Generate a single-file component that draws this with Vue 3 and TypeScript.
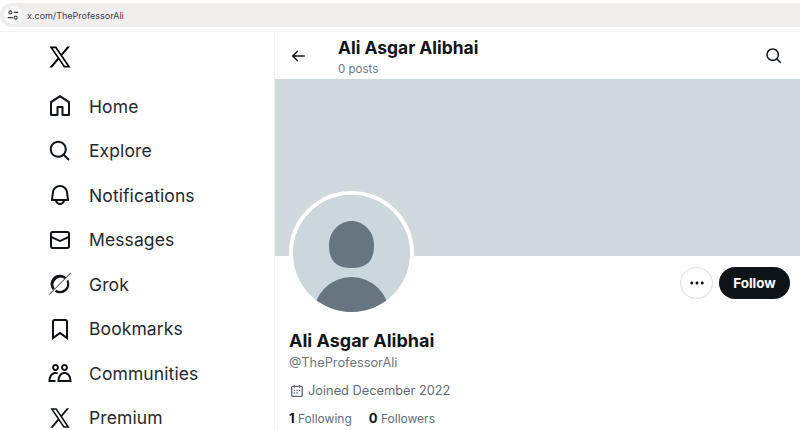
<script setup lang="ts">
interface NavItem { label: string; icon: string }
const xLogo = 'M21.742 21.75l-7.563-11.179 7.056-8.321h-2.456l-5.691 6.714-4.54-6.714H2.359l7.29 10.776L2.25 21.75h2.456l6.035-7.118 4.818 7.118h6.191-.008zM7.739 3.818L18.81 20.182h-2.447L5.29 3.818h2.447z'
const search = 'M10.25 3.75c-3.59 0-6.5 2.91-6.5 6.5s2.91 6.5 6.5 6.5c1.795 0 3.419-.726 4.596-1.904 1.178-1.177 1.904-2.801 1.904-4.596 0-3.59-2.91-6.5-6.5-6.5zm-8.5 6.5c0-4.694 3.806-8.5 8.5-8.5s8.5 3.806 8.5 8.5c0 1.986-.682 3.815-1.824 5.262l4.781 4.781-1.414 1.414-4.781-4.781c-1.447 1.142-3.276 1.824-5.262 1.824-4.694 0-8.5-3.806-8.5-8.5z'
const grok = 'M12 2.8a9.2 9.2 0 0 1 6.6 2.8l-1.6 1.6A7 7 0 0 0 6.6 16.2l-1.8 1.7A9.2 9.2 0 0 1 12 2.8zM20.2 7.6a9.2 9.2 0 0 1-13.6 11.8l1.7-1.6a7 7 0 0 0 10.3-8.4zM23 1 1.4 23l-.4-.4L22.6.6z'
const nav: NavItem[] = [
  { label: 'Home', icon: 'M21.591 7.146L12.52 1.157c-.316-.21-.724-.21-1.04 0l-9.071 5.99c-.26.173-.409.456-.409.757v13.183c0 .502.418.913.929.913h6.638c.511 0 .929-.41.929-.913v-7.075h3.008v7.075c0 .502.418.913.929.913h6.639c.51 0 .928-.41.928-.913V7.904c0-.301-.158-.584-.408-.758zM20 20l-4.5.01.011-7.097c0-.502-.418-.913-.928-.913H9.44c-.511 0-.929.41-.929.913L8.5 20H4V8.773l8.011-5.342L20 8.764z' },
  { label: 'Explore', icon: search },
  { label: 'Notifications', icon: 'M19.993 9.042C19.48 5.017 16.054 2 11.996 2s-7.49 3.021-7.999 7.051L2.866 18H7.1c.463 2.282 2.481 4 4.9 4s4.437-1.718 4.9-4h4.236l-1.143-8.958zM12 20c-1.306 0-2.417-.835-2.829-2h5.658c-.412 1.165-1.523 2-2.829 2zm-6.866-4l.847-6.698C6.364 6.272 8.941 4 11.996 4s5.627 2.268 6.013 5.295L18.864 16H5.134z' },
  { label: 'Messages', icon: 'M1.998 5.5c0-1.381 1.119-2.5 2.5-2.5h15c1.381 0 2.5 1.119 2.5 2.5v13c0 1.381-1.119 2.5-2.5 2.5h-15c-1.381 0-2.5-1.119-2.5-2.5v-13zm2.5-.5c-.276 0-.5.224-.5.5v2.764l8 3.638 8-3.636V5.5c0-.276-.224-.5-.5-.5h-15zm15.5 5.463l-8 3.636-8-3.638V18.5c0 .276.224.5.5.5h15c.276 0 .5-.224.5-.5v-8.037z' },
  { label: 'Grok', icon: grok },
  { label: 'Bookmarks', icon: 'M4 4.5C4 3.12 5.119 2 6.5 2h11C18.881 2 20 3.12 20 4.5v18.44l-8-5.71-8 5.71V4.5zM6.5 4c-.276 0-.5.22-.5.5v14.56l6-4.29 6 4.29V4.5c0-.28-.224-.5-.5-.5h-11z' },
  { label: 'Communities', icon: 'M7.501 19.917L7.471 21H.472l.029-1.027c.184-6.618 3.736-8.977 7-8.977.963 0 1.95.212 2.87.672-.444.478-.851 1.03-1.212 1.656-.507-.204-1.054-.329-1.658-.329-2.767 0-4.57 2.223-4.938 6.004H7.56c-.023.302-.05.599-.059.917zm15.998.056L23.528 21H9.472l.029-1.027c.184-6.618 3.736-8.977 7-8.977s6.816 2.358 7 8.977zM21.437 19c-.367-3.781-2.17-6.004-4.938-6.004s-4.57 2.223-4.938 6.004h9.875zm-4.938-9c-.799 0-1.527-.279-2.116-.73-.836-.64-1.384-1.638-1.384-2.77 0-1.93 1.567-3.5 3.5-3.5s3.5 1.57 3.5 3.5c0 1.132-.548 2.13-1.384 2.77-.589.451-1.317.73-2.116.73zm-1.5-3.5c0 .827.673 1.5 1.5 1.5s1.5-.673 1.5-1.5-.673-1.5-1.5-1.5-1.5.673-1.5 1.5zM7.5 3C9.433 3 11 4.57 11 6.5S9.433 10 7.5 10 4 8.43 4 6.5 5.567 3 7.5 3zm0 2C6.673 5 6 5.673 6 6.5S6.673 8 7.5 8 9 7.327 9 6.5 8.327 5 7.5 5z' },
  { label: 'Premium', icon: xLogo },
]
</script>

<template>
  <div class="page">
    <div class="browser">
      <div class="address">
        <span class="site-btn">
          <svg viewBox="0 0 16 16" width="12" height="12" fill="none" stroke="#3c4043" stroke-width="1.4">
            <circle cx="4.5" cy="4.5" r="2" />
            <path d="M9 4.5h6M1 11.5h7" />
            <circle cx="11.5" cy="11.5" r="2" />
          </svg>
        </span>
        <span class="url">x.com/TheProfessorAli</span>
      </div>
    </div>
    <div class="columns">
      <aside class="sidebar">
        <svg class="logo" viewBox="0 0 24 24"><path :d="xLogo" /></svg>
        <nav class="nav">
          <a v-for="item in nav" :key="item.label" class="nav-item">
            <svg class="nav-icon" viewBox="0 0 24 24"><path :d="item.icon" /></svg>
            <span>{{ item.label }}</span>
          </a>
        </nav>
      </aside>
      <main class="main">
        <header class="top">
          <svg class="back" viewBox="0 0 24 24"><path d="M7.414 13l5.043 5.04-1.414 1.42L3.586 12l7.457-7.46 1.414 1.42L7.414 11H21v2H7.414z" /></svg>
          <div class="top-text">
            <div class="top-name">Ali Asgar Alibhai</div>
            <div class="top-posts">0 posts</div>
          </div>
          <svg class="top-search" viewBox="0 0 24 24"><path :d="search" /></svg>
        </header>
        <div class="banner"></div>
        <section class="profile">
          <div class="head">
            <div class="avatar">
              <svg viewBox="0 0 117 117" width="117" height="117">
                <rect width="117" height="117" fill="#ccd6dd" />
                <path d="M58.5 26C70 26 81 36 81 50C81 66 74 73 58.5 73C43 73 36 66 36 50C36 36 47 26 58.5 26z" fill="#66757f" />
                <circle cx="58.5" cy="120" r="38" fill="#66757f" />
              </svg>
            </div>
            <div class="actions">
              <button class="more">
                <svg viewBox="0 0 24 24" width="18" height="18"><path d="M3 12c0-1.100.9-2 2-2s2 .9 2 2-.9 2-2 2-2-.9-2-2zm9 2c1.100 0 2-.9 2-2s-.9-2-2-2-2 .9-2 2 .9 2 2 2zm7 0c1.100 0 2-.9 2-2s-.9-2-2-2-2 .9-2 2 .9 2 2 2z" /></svg>
              </button>
              <button class="follow">Follow</button>
            </div>
          </div>
          <h1 class="name">Ali Asgar Alibhai</h1>
          <div class="handle">@TheProfessorAli</div>
          <div class="joined">
            <svg viewBox="0 0 24 24" width="16" height="16"><path d="M7 4V3h2v1h6V3h2v1h1.500C19.890 4 21 5.120 21 6.500v12c0 1.380-1.110 2.500-2.500 2.500h-13C4.120 21 3 19.880 3 18.500v-12C3 5.120 4.120 4 5.500 4H7zm0 2H5.500c-.27 0-.5.22-.5.5v12c0 .28.23.5.5.5h13c.28 0 .5-.22.5-.5v-12c0-.28-.22-.5-.5-.5H17v1h-2V6H9v1H7V6zm0 6h2v-2H7v2zm0 4h2v-2H7v2zm4-4h2v-2h-2v2zm0 4h2v-2h-2v2zm4-4h2v-2h-2v2z" /></svg>
            <span>Joined December 2022</span>
          </div>
          <div class="stats">
            <span><b>1</b> Following</span>
            <span><b>0</b> Followers</span>
          </div>
        </section>
      </main>
    </div>
  </div>
</template>

<style>
html, body { margin: 0; background: #fff; }
</style>

<style scoped>
.page {
  width: 800px;
  height: 430px;
  overflow: hidden;
  background: #fff;
  font-family: Inter, "Liberation Sans", sans-serif;
  color: #0f1419;
}
.browser {
  height: 32px;
  box-sizing: border-box;
  padding-top: 3px;
  border-bottom: 1px solid #f4f3f2;
}
.address {
  height: 24px;
  display: flex;
  align-items: center;
  gap: 5px;
  padding-left: 2px;
  background: #efeeed;
  border-radius: 12px 0 0 12px;
}
.site-btn {
  width: 18px;
  height: 18px;
  border-radius: 50%;
  background: #fafafa;
  display: flex;
  align-items: center;
  justify-content: center;
  margin-left: 2px;
}
.url {
  font-size: 9px;
  color: #3c4043;
}
.columns {
  display: flex;
  height: 398px;
}
.sidebar {
  width: 275px;
  box-sizing: border-box;
  padding: 12px 0 0 48px;
  border-right: 1px solid #eff3f4;
}
.logo {
  display: block;
  width: 26px;
  height: 26px;
  margin: 0 0 14px -1px;
}
.nav {
  display: flex;
  flex-direction: column;
}
.nav-item {
  height: 44.5px;
  display: flex;
  align-items: center;
  gap: 17px;
  font-size: 17.5px;
  letter-spacing: 0.1px;
  color: #24292e;
}
.nav-icon {
  width: 24px;
  height: 24px;
  fill: #0f1419;
  flex: none;
}
.main {
  flex: 1;
  min-width: 0;
}
.top {
  height: 47px;
  box-sizing: border-box;
  display: flex;
  align-items: flex-start;
  padding: 0 17px 0 14px;
}
.back {
  width: 18px;
  height: 18px;
  margin-top: 15px;
  fill: #0f1419;
}
.top-text {
  margin-left: 31px;
  flex: 1;
}
.top-name {
  font-size: 17.4px;
  font-weight: 700;
  line-height: 22px;
  margin-top: 5px;
}
.top-posts {
  font-size: 11.5px;
  line-height: 14px;
  margin-top: 3px;
  color: #6c7680;
}
.top-search {
  width: 18px;
  height: 18px;
  margin-top: 15px;
  fill: #0f1419;
}
.banner {
  height: 177px;
  background: #cfd9de;
}
.profile {
  padding: 0 14px;
}
.head {
  display: flex;
  justify-content: space-between;
  align-items: flex-start;
}
.avatar {
  width: 117px;
  height: 117px;
  margin-top: -65px;
  border: 4px solid #fff;
  border-radius: 50%;
  overflow: hidden;
  flex: none;
}
.avatar svg {
  display: block;
}
.actions {
  display: flex;
  align-items: center;
  gap: 6px;
  margin: 11px -4px 0 0;
}
.more {
  width: 33px;
  height: 32px;
  box-sizing: border-box;
  padding: 0;
  border: 1px solid #dfe3e6;
  border-radius: 50%;
  background: #fff;
  display: flex;
  align-items: center;
  justify-content: center;
}
.more svg {
  fill: #0f1419;
}
.follow {
  width: 71px;
  height: 32px;
  padding: 0;
  border: 0;
  border-radius: 16px;
  background: #0f1419;
  color: #fff;
  font: 700 13.5px Inter, "Liberation Sans", sans-serif;
}
.name {
  margin: 14px 0 0;
  font-size: 18px;
  line-height: 22px;
  font-weight: 700;
}
.handle {
  margin-top: 2px;
  font-size: 12.8px;
  line-height: 18px;
  color: #6c7680;
}
.joined {
  margin-top: 10px;
  display: flex;
  align-items: center;
  gap: 3px;
  font-size: 12.8px;
  line-height: 18px;
  color: #5f6b75;
}
.joined svg {
  fill: #5f6b75;
}
.stats {
  margin-top: 9px;
  display: flex;
  gap: 17px;
  font-size: 12px;
  line-height: 18px;
  color: #5f6b75;
}
.stats b {
  color: #0f1419;
  font-size: 13px;
}
</style>
